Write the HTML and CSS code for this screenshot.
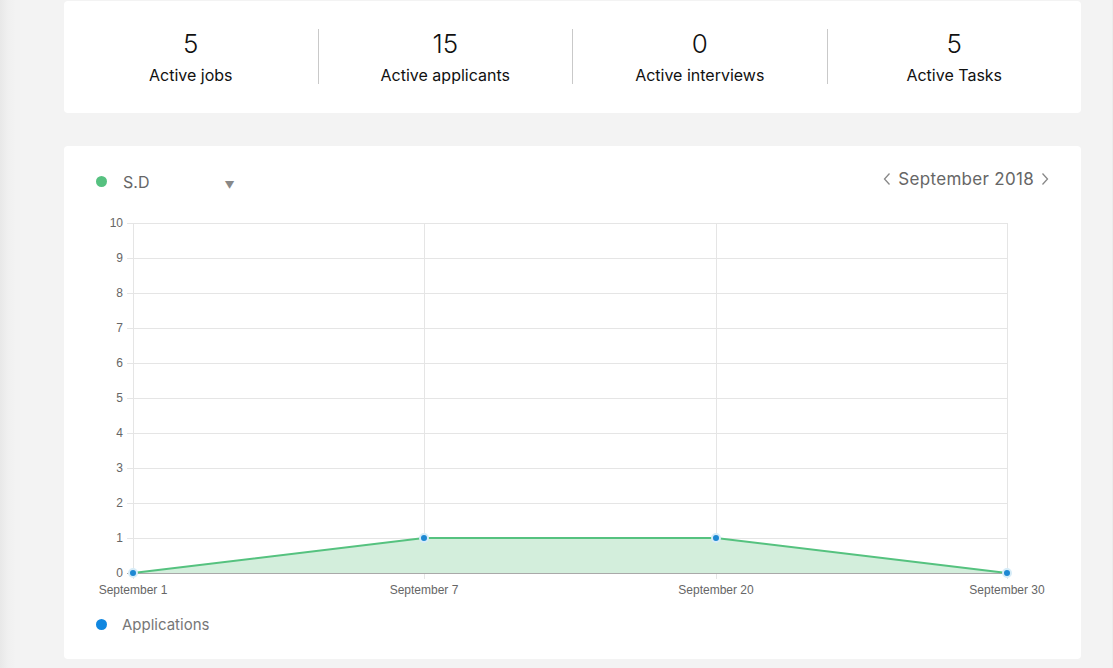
FILE: index.html
```html
<!DOCTYPE html>
<html>
<head>
<meta charset="utf-8">
<link rel="stylesheet" href="styles.css">
</head>
<body>
<div class="page">
  <div class="card stats">
    <div class="stat"><div class="num">5</div><div class="label">Active jobs</div></div>
    <div class="stat"><div class="num">15</div><div class="label">Active applicants</div></div>
    <div class="stat"><div class="num">0</div><div class="label">Active interviews</div></div>
    <div class="stat"><div class="num">5</div><div class="label">Active Tasks</div></div>
  </div>
  <div class="card chart-card">
    <div class="chart-head">
      <div class="series">
        <span class="dot green"></span>
        <span class="series-name">S.D</span>
        <span class="caret">▼</span>
      </div>
      <div class="month">
        <svg class="chev" width="8" height="14" viewBox="0 0 8 14"><path d="M6.5 1.5 L1.5 7 L6.5 12.5" fill="none" stroke="#888" stroke-width="1.3"/></svg>
        <span class="month-name">September 2018</span>
        <svg class="chev" width="8" height="14" viewBox="0 0 8 14"><path d="M1.5 1.5 L6.5 7 L1.5 12.5" fill="none" stroke="#888" stroke-width="1.3"/></svg>
      </div>
    </div>
    <svg class="chart" width="1017" height="392" viewBox="0 0 1017 392">
      <g stroke="#e5e5e5" stroke-width="1">
        <line x1="63" y1="11.5" x2="943" y2="11.5"/>
        <line x1="63" y1="46.5" x2="943" y2="46.5"/>
        <line x1="63" y1="81.5" x2="943" y2="81.5"/>
        <line x1="63" y1="116.5" x2="943" y2="116.5"/>
        <line x1="63" y1="151.5" x2="943" y2="151.5"/>
        <line x1="63" y1="186.5" x2="943" y2="186.5"/>
        <line x1="63" y1="221.5" x2="943" y2="221.5"/>
        <line x1="63" y1="256.5" x2="943" y2="256.5"/>
        <line x1="63" y1="291.5" x2="943" y2="291.5"/>
        <line x1="63" y1="326.5" x2="943" y2="326.5"/>
        <line x1="69.5" y1="11" x2="69.5" y2="367"/>
        <line x1="360.5" y1="11" x2="360.5" y2="367"/>
        <line x1="652.5" y1="11" x2="652.5" y2="367"/>
        <line x1="943.5" y1="11" x2="943.5" y2="367"/>
      </g>
      <polygon points="69,361 360,326 652,326 943,361" fill="#d3eedc"/>
      <line x1="63" y1="361.5" x2="943" y2="361.5" stroke="#a9a9a9" stroke-width="1"/>
      <polyline points="69,361 360,326 652,326 943,361" fill="none" stroke="#55c27f" stroke-width="2"/>
      <g fill="#1d88d3" stroke="#d6ecf8" stroke-width="2">
        <circle cx="69" cy="361" r="4"/>
        <circle cx="360" cy="326" r="4"/>
        <circle cx="652" cy="326" r="4"/>
        <circle cx="943" cy="361" r="4"/>
      </g>
      <g class="ylab" text-anchor="end">
        <text x="59" y="15">10</text>
        <text x="59" y="50">9</text>
        <text x="59" y="85">8</text>
        <text x="59" y="120">7</text>
        <text x="59" y="155">6</text>
        <text x="59" y="190">5</text>
        <text x="59" y="225">4</text>
        <text x="59" y="260">3</text>
        <text x="59" y="295">2</text>
        <text x="59" y="330">1</text>
        <text x="59" y="365">0</text>
      </g>
      <g class="xlab" text-anchor="middle">
        <text x="69" y="382">September 1</text>
        <text x="360" y="382">September 7</text>
        <text x="652" y="382">September 20</text>
        <text x="943" y="382">September 30</text>
      </g>
    </svg>
    <div class="legend">
      <span class="dot blue"></span>
      <span class="legend-name">Applications</span>
    </div>
  </div>
</div>
<div class="scrollbar"></div>
</body>
</html>
```

FILE: styles.css
```css
html, body {
  margin: 0;
  padding: 0;
}
body {
  width: 1113px;
  height: 668px;
  overflow: hidden;
  background: linear-gradient(to right, #e8e8e8 0px, #f0f0f0 8px, #f3f3f3 16px, #f3f3f3 100%);
  font-family: Inter, "Liberation Sans", sans-serif;
  position: relative;
}
.page {
  padding: 1px 0 0 64px;
  width: 1017px;
  display: flex;
  flex-direction: column;
  gap: 33px;
}
.card {
  background: #fff;
  border-radius: 4px;
}
.stats {
  height: 112px;
  display: flex;
  align-items: flex-start;
  padding-top: 28px;
  box-sizing: border-box;
}
.stat {
  flex: 1;
  text-align: center;
  border-left: 1px solid #c9c9c9;
  height: 55px;
}
.stat:first-child {
  border-left: none;
}
.num {
  font-size: 26px;
  font-weight: 300;
  color: #111;
  line-height: 30px;
  margin-top: 0;
}
.label {
  font-size: 16px;
  color: #111;
  line-height: 20px;
  margin-top: 6px;
}
.chart-card {
  height: 513px;
  display: flex;
  flex-direction: column;
}
.chart-head {
  display: flex;
  justify-content: space-between;
  align-items: center;
  padding: 23px 32px 0 32px;
  height: 22px;
}
.series {
  display: flex;
  align-items: center;
  margin-top: 2px;
}
.dot {
  width: 11px;
  height: 11px;
  border-radius: 50%;
  display: inline-block;
}
.green {
  background: #56c180;
}
.blue {
  background: #1187e0;
}
.series-name {
  margin-left: 16px;
  font-size: 16px;
  color: #666;
  margin-top: 2px;
}
.caret {
  margin-left: 75px;
  font-size: 10px;
  color: #888;
  margin-top: 7px;
}
.month {
  display: flex;
  align-items: center;
  gap: 7px;
  font-size: 17px;
  color: #666;
  margin-right: 0;
  margin-top: -3px;
}
.month-name {
  letter-spacing: 0.3px;
}
.chev {
  display: block;
}
.chart {
  display: block;
  margin-top: 21px;
}
.ylab text, .xlab text {
  font-family: "Liberation Sans", Arial, sans-serif;
  font-size: 12px;
  fill: #666;
}
.legend {
  display: flex;
  align-items: center;
  padding-left: 32px;
  margin-top: 11px;
}
.legend-name {
  margin-left: 15px;
  font-size: 15px;
  color: #777;
}
.scrollbar {
  position: absolute;
  right: 0;
  top: 0;
  width: 1px;
  height: 668px;
  background: #ececec;
}
```
